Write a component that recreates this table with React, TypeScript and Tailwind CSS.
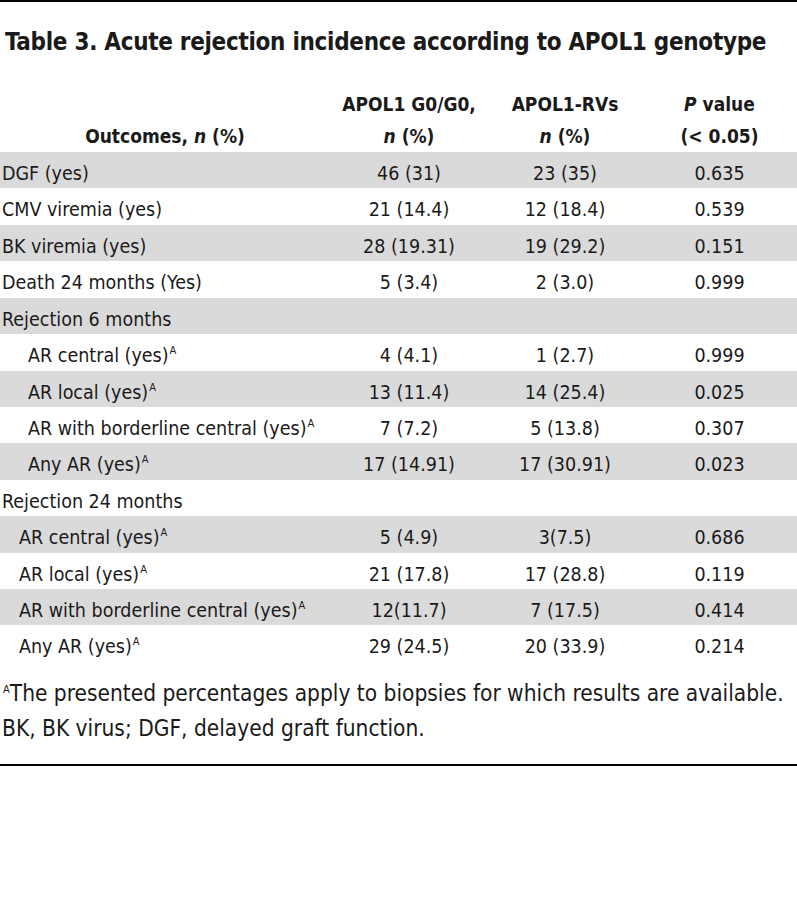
import React from "react";

type Row = { label: string; a?: string; b?: string; p?: string; indent?: number; sup?: boolean };

const rows: Row[] = [
  { label: "DGF (yes)", a: "46 (31)", b: "23 (35)", p: "0.635" },
  { label: "CMV viremia (yes)", a: "21 (14.4)", b: "12 (18.4)", p: "0.539" },
  { label: "BK viremia (yes)", a: "28 (19.31)", b: "19 (29.2)", p: "0.151" },
  { label: "Death 24 months (Yes)", a: "5 (3.4)", b: "2 (3.0)", p: "0.999" },
  { label: "Rejection 6 months" },
  { label: "AR central (yes)", a: "4 (4.1)", b: "1 (2.7)", p: "0.999", indent: 1, sup: true },
  { label: "AR local (yes)", a: "13 (11.4)", b: "14 (25.4)", p: "0.025", indent: 1, sup: true },
  { label: "AR with borderline central (yes)", a: "7 (7.2)", b: "5 (13.8)", p: "0.307", indent: 1, sup: true },
  { label: "Any AR (yes)", a: "17 (14.91)", b: "17 (30.91)", p: "0.023", indent: 1, sup: true },
  { label: "Rejection 24 months" },
  { label: "AR central (yes)", a: "5 (4.9)", b: "3(7.5)", p: "0.686", indent: 2, sup: true },
  { label: "AR local (yes)", a: "21 (17.8)", b: "17 (28.8)", p: "0.119", indent: 2, sup: true },
  { label: "AR with borderline central (yes)", a: "12(11.7)", b: "7 (17.5)", p: "0.414", indent: 2, sup: true },
  { label: "Any AR (yes)", a: "29 (24.5)", b: "20 (33.9)", p: "0.214", indent: 2, sup: true },
];

const font = "font-['DejaVu_Sans_Condensed','Liberation_Sans_Narrow','DejaVu_Sans',sans-serif]";

function Sup() {
  return <span className="relative top-[-8px] ml-[1px] text-[11px] leading-none">A</span>;
}

export default function App() {
  return (
    <div className={`w-[797px] h-[900px] bg-white text-[#1a1a1a] ${font}`}>
      <div className="border-t-[2px] border-black" />
      <h1 className="mt-[22px] pl-[5px] text-[24px] leading-[36px] font-bold tracking-[-0.3px] whitespace-nowrap">
        Table 3. Acute rejection incidence according to APOL1 genotype
      </h1>
      <table className="mt-[28px] w-[797px] border-collapse table-fixed">
        <colgroup>
          <col className="w-[330px]" />
          <col className="w-[158px]" />
          <col className="w-[154px]" />
          <col className="w-[155px]" />
        </colgroup>
        <thead>
          <tr className="text-[19px] leading-[32px] font-bold">
            <th className="align-bottom text-center font-bold p-0">
              Outcomes, <i>n</i> (%)
            </th>
            <th className="align-bottom text-center font-bold p-0">
              APOL1 G0/G0,
              <br />
              <i>n</i> (%)
            </th>
            <th className="align-bottom text-center font-bold p-0">
              APOL1-RVs
              <br />
              <i>n</i> (%)
            </th>
            <th className="align-bottom text-center font-bold p-0">
              <i>P</i> value
              <br />
              (&lt; 0.05)
            </th>
          </tr>
        </thead>
        <tbody>
          {rows.map((r, i) => (
            <tr
              key={i}
              className={`h-[36.43px] text-[19.5px] leading-[29px] ${i % 2 === 0 ? "bg-[#dadada]" : "bg-white"}`}
            >
              <td
                className={`p-0 pt-[7px] align-top whitespace-nowrap ${r.indent === 1 ? "pl-[28px]" : r.indent === 2 ? "pl-[19px]" : "pl-[2px]"}`}
              >
                {r.label}
                {r.sup && <Sup />}
              </td>
              <td className="p-0 pt-[7px] align-top text-center">{r.a ?? ""}</td>
              <td className="p-0 pt-[7px] align-top text-center">{r.b ?? ""}</td>
              <td className="p-0 pt-[7px] align-top text-center">{r.p ?? ""}</td>
            </tr>
          ))}
        </tbody>
      </table>
      <div className="pt-[14px] pl-[2px] text-[22.5px] leading-[35px] whitespace-nowrap">
        <p>
          <Sup />
          The presented percentages apply to biopsies for which results are available.
        </p>
        <p>BK, BK virus; DGF, delayed graft function.</p>
      </div>
      <div className="mt-[18px] border-t-[2px] border-black" />
    </div>
  );
}
